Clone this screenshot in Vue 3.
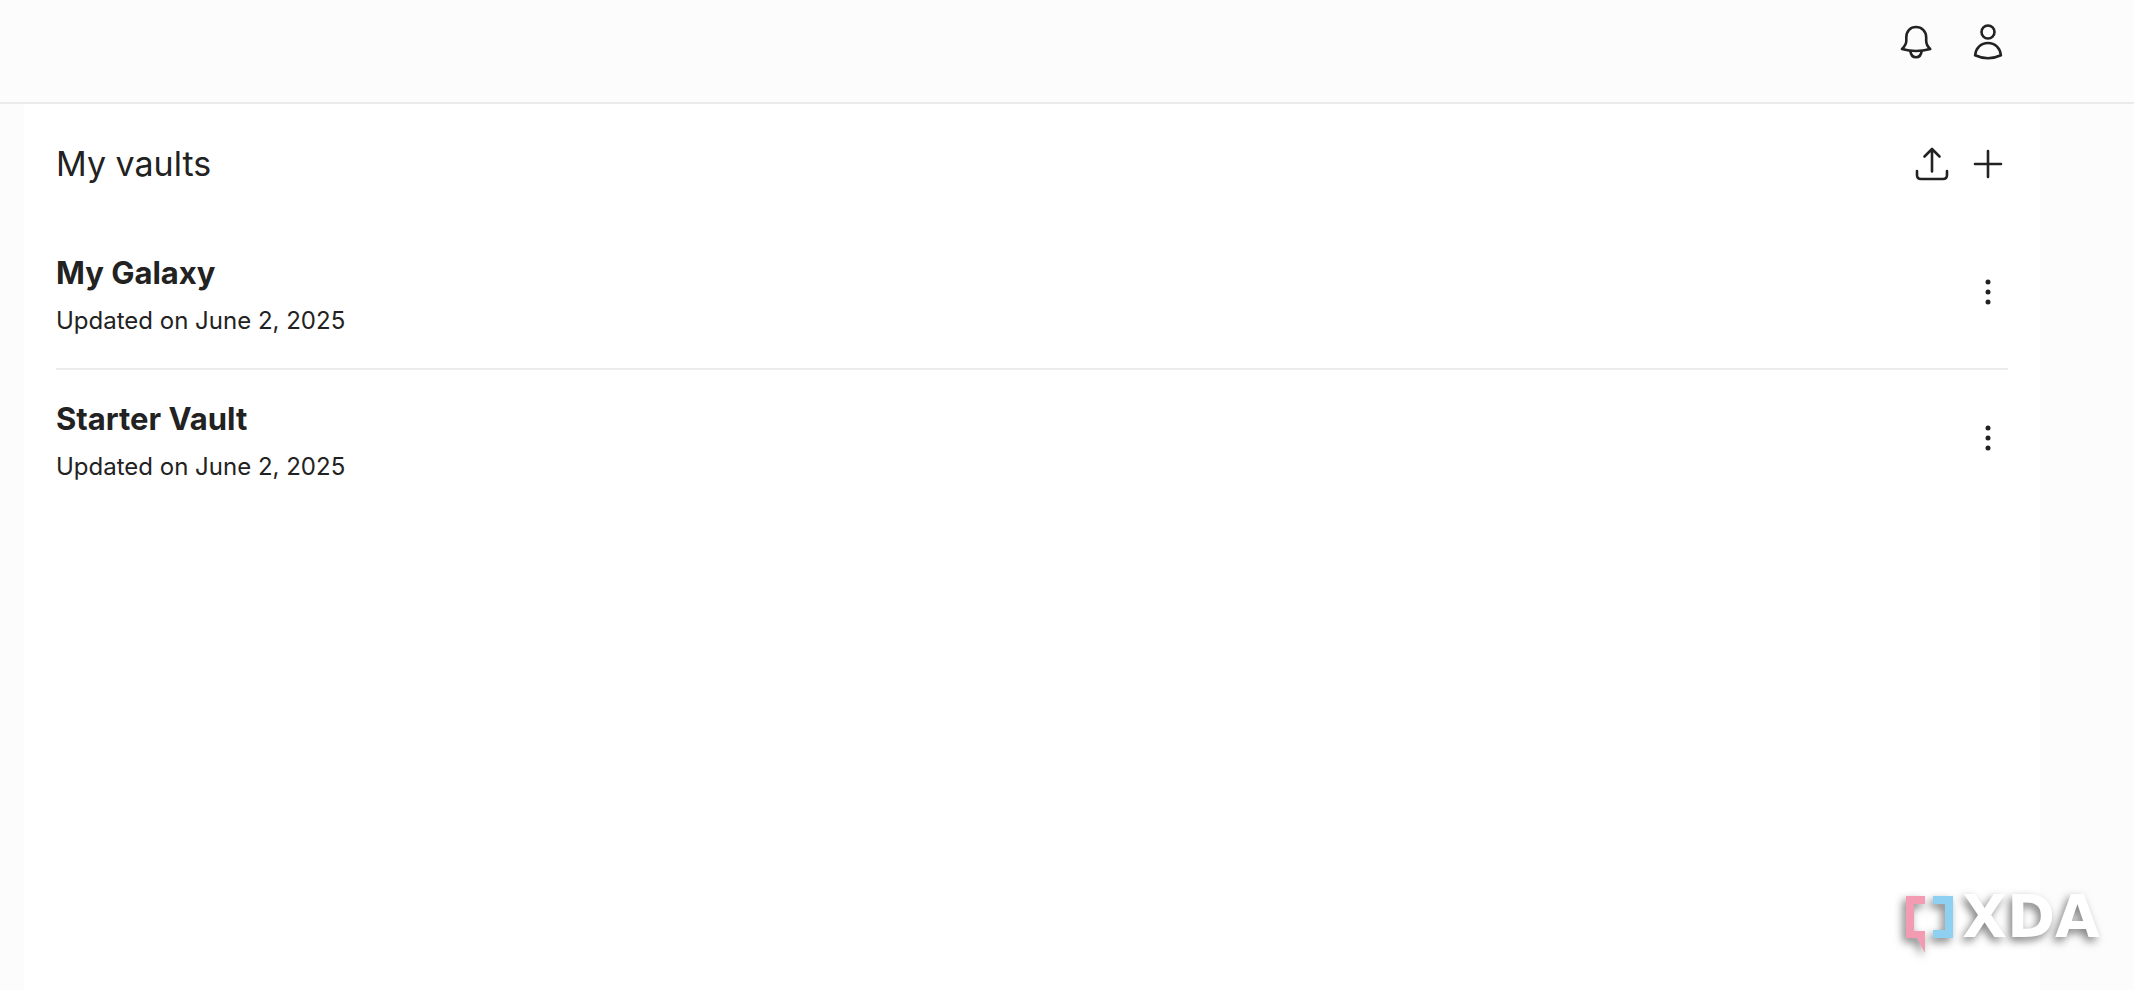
<script setup>
const vaults = [
  { name: 'My Galaxy', updated: 'Updated on June 2, 2025' },
  { name: 'Starter Vault', updated: 'Updated on June 2, 2025' },
]
</script>

<template>
  <div class="page">
    <header class="topbar">
      <button class="icon-button" type="button" aria-label="Notifications">
        <svg viewBox="0 0 40 40" aria-hidden="true">
          <path d="M10.300 19V15.500C10.300 9 14.400 5 20 5S30.200 9 30.200 15.500V19C30.200 22.500 31.500 24.500 34.200 27Q27 29 20 29T6 27C8.500 24.500 10.300 22.500 10.300 19Z" />
          <path d="M14.400 29C14.800 33 17 35.200 20 35.200S25.200 33 25.600 29" />
        </svg>
      </button>
      <button class="icon-button" type="button" aria-label="Account">
        <svg viewBox="0 0 40 40" aria-hidden="true">
          <circle cx="20" cy="10" r="6.500" />
          <path d="M20 21C13 21 7.800 26 7.100 33.300Q13.500 36.300 20 36.300T32.900 33.300C32.200 26 27 21 20 21Z" />
        </svg>
      </button>
    </header>

    <main class="panel">
      <div class="panel-head">
        <h1>My vaults</h1>
        <div class="actions">
          <button class="icon-button" type="button" aria-label="Import vault">
            <svg viewBox="0 0 40 40" aria-hidden="true">
              <path d="M20 27.500V5M12.500 12.500L20 5L27.500 12.500M5 27V31Q5 35 9 35H31Q35 35 35 31V27" />
            </svg>
          </button>
          <button class="icon-button" type="button" aria-label="New vault">
            <svg viewBox="0 0 40 40" aria-hidden="true">
              <path d="M20 7V33M7 20H33" />
            </svg>
          </button>
        </div>
      </div>

      <ul class="vaults">
        <li v-for="vault in vaults" :key="vault.name" class="vault">
          <div class="info">
            <h2>{{ vault.name }}</h2>
            <p>{{ vault.updated }}</p>
          </div>
          <button class="icon-button" type="button" :aria-label="`Options for ${vault.name}`">
            <svg class="dots" viewBox="0 0 40 40" aria-hidden="true">
              <circle cx="20" cy="10" r="2.500" />
              <circle cx="20" cy="20" r="2.500" />
              <circle cx="20" cy="30" r="2.500" />
            </svg>
          </button>
        </li>
      </ul>
    </main>

    <div class="brand">
      <svg viewBox="0 0 48 60" aria-hidden="true">
        <path class="pink" d="M0 0H19V8H8V35H19V57L11 42H0Z" />
        <path class="blue" d="M27 0H47V42H27V34H39V8H27Z" />
      </svg>
      <span>XDA</span>
    </div>
  </div>
</template>

<style>
body {
  margin: 0;
  background: #fcfcfc;
}
</style>

<style scoped>
.page {
  position: relative;
  display: flex;
  flex-direction: column;
  min-height: 100vh;
  color: #222;
  font-family: Inter, "Liberation Sans", sans-serif;
}

.topbar {
  display: flex;
  gap: 32px;
  justify-content: flex-end;
  padding: 22px 126px 40px 24px;
  border-bottom: 2px solid #ebebeb;
}

.icon-button {
  flex: none;
  width: 40px;
  height: 40px;
  padding: 0;
  border: 0;
  background: none;
  color: inherit;
  cursor: pointer;
}

.icon-button svg {
  display: block;
  width: 40px;
  height: 40px;
  fill: none;
  stroke: currentColor;
  stroke-width: 2.6;
  stroke-linecap: round;
  stroke-linejoin: round;
}

.icon-button .dots {
  fill: currentColor;
  stroke: none;
}

.panel {
  flex: 1;
  margin: 0 94px 0 24px;
  padding: 0 32px;
  background: #fff;
}

.panel-head {
  display: flex;
  align-items: center;
  justify-content: space-between;
  padding: 36px 0;
}

h1,
h2,
p {
  margin: 0;
}

h1 {
  font-size: 34px;
  font-weight: 400;
  line-height: 48px;
}

.actions {
  display: flex;
  gap: 16px;
}

.vaults {
  margin: 0;
  padding: 0;
  list-style: none;
}

.vault {
  display: flex;
  align-items: center;
  justify-content: space-between;
  padding: 24px 0 32px;
}

.vault + .vault {
  border-top: 2px solid #ebebeb;
}

h2 {
  font-size: 31px;
  font-weight: 650;
  line-height: 50px;
}

p {
  margin-top: 8px;
  font-size: 24px;
  line-height: 30px;
}

.brand {
  position: absolute;
  right: 34px;
  bottom: 34px;
  display: flex;
  gap: 8px;
  filter: drop-shadow(-3px 4px 4px rgba(0, 0, 0, 0.5));
}

.brand svg {
  width: 48px;
  height: 60px;
}

.brand span {
  color: #fff;
  font-family: "DejaVu Sans", sans-serif;
  font-size: 58px;
  font-weight: 700;
  line-height: 42px;
}

.pink {
  fill: #f29bb2;
}

.blue {
  fill: #8ed0f2;
}
</style>
